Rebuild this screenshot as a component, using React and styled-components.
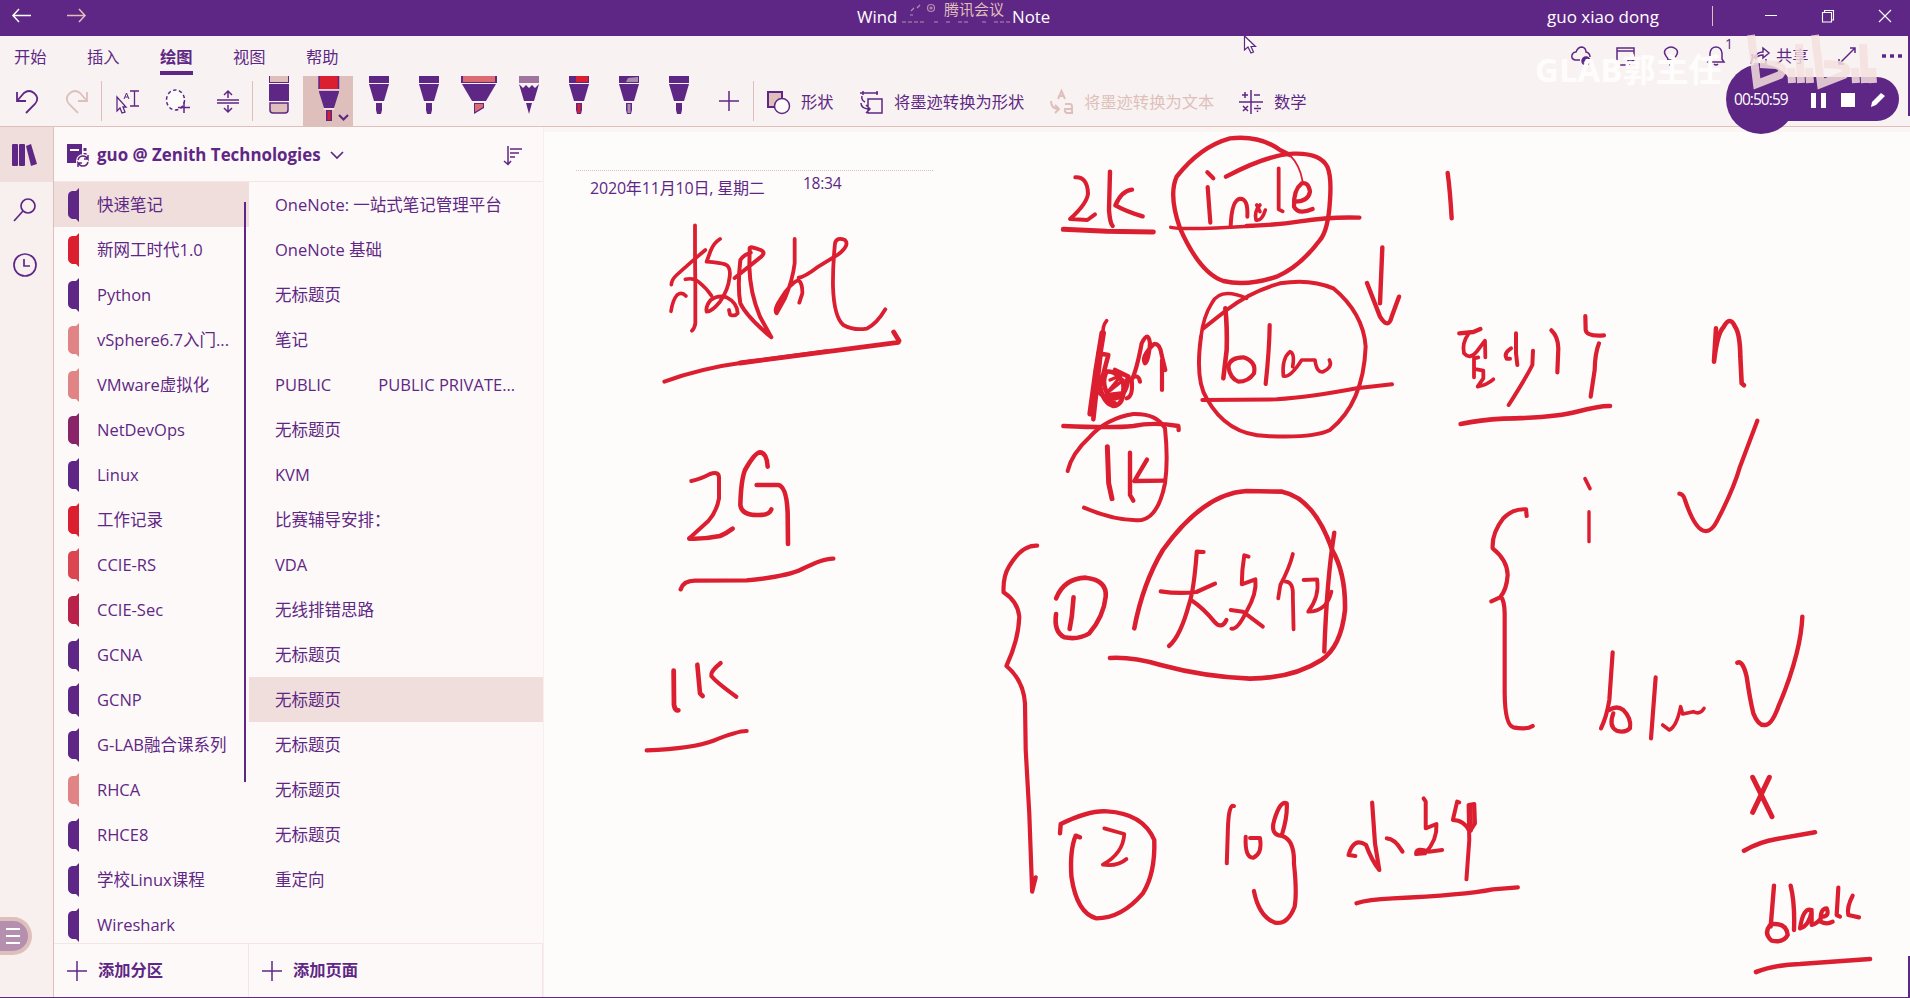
import React from "react";
import styled, { createGlobalStyle, css } from "styled-components";

const c = {
  purple: "#5f2785",
  red: "#db1f30",
  pink: "#dfbfbb",
  paper: "#fefcfb",
  ribbon: "#f8f3f2",
  rail: "#f8f0ef",
  pane: "#fdf9f8",
  active: "#efdedc",
};

const Global = createGlobalStyle`
  * { box-sizing: border-box; }
  body { margin: 0; overflow: hidden; background: ${c.paper}; }
`;

const Screen = styled.div`
  position: relative;
  width: 1910px;
  height: 998px;
  display: flex;
  flex-direction: column;
  background: ${c.paper};
  color: ${c.purple};
  border-bottom: 1px solid ${c.purple};
  font-family: "Open Sans", "Noto Sans CJK SC", sans-serif;
  font-size: 16.3px;
  line-height: 1;
  white-space: nowrap;
  overflow: hidden;
`;

const Icon = styled.svg`
  display: block;
  flex: none;
  width: ${(p) => p.$w}px;
  height: ${(p) => p.$h || p.$w}px;
  fill: none;
  stroke: ${(p) => p.$color || c.purple};
  stroke-width: ${(p) => p.$sw || 1.5};
  overflow: visible;
`;

/* title bar */
const TitleBar = styled.header`
  height: 36px;
  flex: none;
  display: grid;
  grid-template-columns: 857px 1fr 363px;
  background: ${c.purple};
  color: #fff;
`;
const NavArrows = styled.div`
  display: flex;
  gap: 36px;
  padding: 9px 0 0 12px;
`;
const Title = styled.div`
  display: flex;
  padding-top: 8px;
  font-size: 16.8px;
  line-height: 18px;
`;
const TitlePart = styled.span`
  width: ${(p) => p.$w}px;
`;
const Meeting = styled.span`
  display: flex;
  align-items: center;
  gap: 8px;
  width: 114px;
  padding-left: 10px;
  margin-top: -9px;
  height: 20px;
  font-size: 15px;
  color: ${c.pink};
`;
const WindowArea = styled.div`
  display: flex;
  font-size: 17px;
`;
const Account = styled.span`
  width: 165px;
  padding-top: 8px;
  line-height: 18px;
`;
const WindowButtons = styled.div`
  display: flex;
  gap: 45px;
  height: 20px;
  margin-top: 6px;
  padding: 4px 0 0 52px;
  border-left: 1px solid ${c.pink};
`;

/* ribbon */
const Ribbon = styled.div`
  height: 91px;
  flex: none;
  background: ${c.ribbon};
  border-bottom: 1px solid ${c.pink};
`;
const TabsRow = styled.div`
  display: flex;
  height: 40px;
  padding-left: 14px;
`;
const Tab = styled.div`
  width: 33px;
  height: 39px;
  margin-right: 40px;
  padding-top: 13px;
  ${(p) =>
    p.$on &&
    css`
      font-weight: 700;
      border-bottom: 4px solid ${c.purple};
    `}
`;
const Actions = styled.div`
  display: flex;
  align-items: center;
  margin-left: 1192px;
  height: 40px;
`;
const Action = styled.div`
  width: ${(p) => p.$w}px;
  position: relative;
  display: flex;
  align-items: center;
  gap: 6px;
`;
const Count = styled.span`
  position: absolute;
  left: 18px;
  top: -9px;
  font-size: 14px;
`;
const ToolsRow = styled.div`
  display: flex;
  height: 50px;
  padding-left: 1px;
`;
const Tool = styled.div`
  width: 50px;
  height: 50px;
  display: flex;
  justify-content: center;
  align-items: ${(p) => (p.$pen ? "flex-start" : "center")};
  padding-left: 1px;
  background: ${(p) => (p.$on ? c.pink : "transparent")};
`;
const Divider = styled.div`
  width: 1px;
  height: 40px;
  margin-top: 5px;
  background: ${c.pink};
`;
const LabelTool = styled.div`
  display: flex;
  align-items: center;
  gap: 11px;
  width: ${(p) => p.$w}px;
  padding-top: 2px;
  color: ${(p) => (p.$off ? c.pink : c.purple)};
`;

/* body */
const Body = styled.div`
  flex: 1;
  min-height: 0;
  display: flex;
`;
const Rail = styled.nav`
  width: 54px;
  background: ${c.rail};
  border-right: 1px solid ${c.pink};
`;
const RailItem = styled.div`
  height: 55px;
  display: flex;
  align-items: center;
  justify-content: center;
  padding-right: 4px;
  background: ${(p) => (p.$on ? c.active : "transparent")};
`;
const Nav = styled.aside`
  width: 490px;
  display: flex;
  flex-direction: column;
  background: ${c.pane};
  border-right: 1px solid #f8eeec;
`;
const Notebook = styled.div`
  height: 55px;
  flex: none;
  display: flex;
  align-items: center;
  padding: 2px 21px 0 13px;
  border-bottom: 1px solid #f3e6e4;
`;
const NotebookName = styled.span`
  width: 225px;
  margin: 0 9px 0 8px;
  font-size: 16.9px;
  font-weight: 700;
`;
const Spacer = styled.div`
  flex: 1;
`;
const Columns = styled.div`
  flex: 1;
  min-height: 0;
  display: flex;
`;
const Column = styled.div`
  position: relative;
  width: ${(p) => p.$w}px;
  display: flex;
  flex-direction: column;
`;
const Rows = styled.div`
  flex: 1;
  min-height: 0;
  overflow: hidden;
`;
const Row = styled.div`
  height: 45px;
  display: flex;
  align-items: center;
  padding-left: ${(p) => p.$pad}px;
  gap: 18px;
  white-space: pre;
  font-size: 16.5px;
  background: ${(p) => (p.$on ? c.active : "transparent")};
`;
const Bookmark = styled.svg`
  width: 11px;
  height: 34px;
  flex: none;
  fill: ${(p) => p.$c};
`;
const RowText = styled.span`
  padding-top: 1px;
`;
const AddRow = styled.div`
  height: 54px;
  flex: none;
  display: flex;
  align-items: center;
  gap: 11px;
  padding-left: 13px;
  font-weight: 700;
  border-top: 1px solid #f3e6e4;
  border-right: 1px solid #f3e6e4;
`;
const Scrollbar = styled.div`
  position: absolute;
  right: 3px;
  top: 20px;
  width: 2px;
  height: 580px;
  background: ${c.purple};
`;
const Page = styled.main`
  flex: 1;
  padding: 43px 0 0 32px;
  box-shadow: inset 0 5px 0 #fbf5f4;
`;
const PageMeta = styled.div`
  width: 357px;
  display: flex;
  padding-left: 14px;
  border-top: 1px dotted ${c.pink};
`;
const DateText = styled.span`
  width: 213px;
  padding-top: 9px;
  font-size: 16px;
  letter-spacing: -0.18px;
`;
const TimeText = styled.span`
  padding-top: 5px;
  font-size: 15.6px;
  letter-spacing: -0.3px;
`;

/* overlays */
const Ink = styled.svg`
  position: absolute;
  left: 0;
  top: 0;
  width: 1910px;
  height: 998px;
  fill: none;
  stroke: ${c.red};
  stroke-linecap: round;
  stroke-linejoin: round;
  pointer-events: none;
  path {
    vector-effect: non-scaling-stroke;
  }
`;
const Recorder = styled.div`
  position: absolute;
  left: 1726px;
  top: 64px;
  width: 173px;
  height: 70px;
`;
const Dial = styled.div`
  position: absolute;
  left: 0;
  top: 0;
  width: 70px;
  height: 70px;
  border-radius: 50%;
  background: ${c.purple};
`;
const Pill = styled.div`
  position: absolute;
  left: 30px;
  top: 13px;
  width: 143px;
  height: 44px;
  border-radius: 0 22px 22px 0;
  background: ${c.purple};
`;
const Controls = styled.div`
  position: absolute;
  left: 8px;
  top: 28px;
  display: flex;
  align-items: center;
  height: 16px;
  color: #fff;
  font-size: 15.4px;
  letter-spacing: -0.9px;
`;
const Elapsed = styled.span`
  width: 77px;
`;
const Watermark = styled.div`
  position: absolute;
  left: 1535px;
  top: 51px;
  font-size: 33px;
  line-height: 38px;
  font-weight: 700;
  color: #fffdfc;
`;
const Floating = styled.svg`
  position: absolute;
  left: ${(p) => p.$x}px;
  top: ${(p) => p.$y}px;
  width: ${(p) => p.$w}px;
  height: ${(p) => p.$h}px;
  overflow: visible;
`;
const EdgeMark = styled.div`
  position: absolute;
  right: 0;
  top: ${(p) => p.$y}px;
  width: 2px;
  height: ${(p) => p.$h}px;
  background: ${c.purple};
`;
const SideBadge = styled.div`
  position: absolute;
  left: 0;
  top: 917px;
  width: 32px;
  height: 38px;
  border-radius: 0 19px 19px 0;
  border: 4px solid ${c.pink};
  border-left: 0;
  background: #b58fae;
  display: flex;
  flex-direction: column;
  justify-content: center;
  gap: 5px;
  padding-left: 6px;
`;
const BadgeLine = styled.div`
  width: 14px;
  height: 2px;
  background: #fff;
`;

const pens = [
  { cap: c.purple, nib: c.purple },
  { cap: c.purple, nib: c.purple },
  { kind: "marker", cap: "#dd6a70", nib: "#dd6a70" },
  { kind: "pencil", cap: "#9f75a0", nib: c.purple },
  { cap: c.purple, cap2: c.red, nib: c.red },
  { cap: c.purple, cap2: "#a98fae", nib: "#a98fae", half: true },
  { cap: c.purple, nib: c.purple },
];

function Pen({ kind, cap, cap2, nib, half }) {
  if (kind === "marker")
    return (
      <Icon $w={36} $h={38} viewBox="0 0 36 38">
        <g stroke="none">
          <path d="M0 0H36V7H0Z" fill={c.purple} />
          <path d="M2 0H34V6H2Z" fill={cap} />
          <path d="M1 8H35L25 25H11Z" fill={c.purple} />
          <path d="M13 27H23V32L13 38Z" fill={c.purple} />
          <path d="M14 28H22V31L14 36Z" fill={nib} />
        </g>
      </Icon>
    );
  return (
    <Icon $w={20} $h={38} viewBox="0 0 20 38">
      <g stroke="none" fill={c.purple}>
        <path d="M0 0H20V7H0Z" fill={cap} />
        {cap2 && <path d={half ? "M9 2L19 1V6H7Z" : "M7 0H19V6H7Z"} fill={cap2} />}
        {kind === "pencil" ? (
          <>
            <path d="M0 8L4 12L7 9L10 12L13 9L16 12L20 8L15 25H5Z" />
            <path d="M7 27H13L10 38Z" />
          </>
        ) : (
          <>
            <path d="M0 8H20L15 25H5Z" />
            <path d="M7 27H13V34L12 38H8L7 34Z" />
            {nib !== c.purple && <path d="M8.5 28H11.5V37H8.5Z" fill={nib} />}
          </>
        )}
      </g>
    </Icon>
  );
}

const sections = [
  ["快速笔记", c.purple],
  ["新网工时代1.0", c.red],
  ["Python", c.purple],
  ["vSphere6.7入门...", "#e08486"],
  ["VMware虚拟化", "#e08486"],
  ["NetDevOps", "#8a2468"],
  ["Linux", c.purple],
  ["工作记录", c.red],
  ["CCIE-RS", "#dc4650"],
  ["CCIE-Sec", "#b8214a"],
  ["GCNA", c.purple],
  ["GCNP", c.purple],
  ["G-LAB融合课系列", c.purple],
  ["RHCA", "#e08486"],
  ["RHCE8", c.purple],
  ["学校Linux课程", c.purple],
  ["Wireshark", c.purple],
];

const pages = [
  "OneNote: 一站式笔记管理平台",
  "OneNote 基础",
  "无标题页",
  "笔记",
  "PUBLIC           PUBLIC PRIVATE...",
  "无标题页",
  "KVM",
  "比赛辅导安排：",
  "VDA",
  "无线排错思路",
  "无标题页",
  "无标题页",
  "无标题页",
  "无标题页",
  "无标题页",
  "重定向",
];

/* handwriting: [transform, [[pen width, stroke], ...]] */
const T = (x, y, sx = 3) => `translate(${x} ${y}) scale(${1 / sx} ${1 / 3})`;
const ink = [
  [T(560, 120), [
    [3.2, "M405 316V400L406 500V610Q404 625 396 632"],
    [3, "M436 390Q400 420 350 465Q335 478 334 494"],
    [3, "M376 478Q400 472 415 485Q440 505 455 528"],
    [3, "M333 574Q338 540 352 524Q366 515 378 528"],
    [3.2, "M480 357Q462 368 452 392L440 425Q480 428 495 433Q513 440 509 470Q505 510 480 545Q455 575 440 575Q436 560 452 540Q475 524 500 532Q532 548 533 580Q525 590 510 584L507 570"],
    [3.4, "M524 474L600 413Q620 398 602 390Q570 378 569 384L568 440Q570 520 600 590L634 652Q560 590 541 550Q532 500 541 420Q550 405 572 398"],
    [3.2, "M704 357V430Q698 480 675 535L650 580Q640 570 660 540Q690 490 715 480Q728 490 727 520L718 548"],
    [3.2, "M716 473Q735 470 770 443L835 403Q870 375 855 360Q830 350 825 370Q818 440 819 500Q822 590 850 615Q880 632 920 626Q950 612 976 568"],
    [3.4, "M313 785Q420 745 560 726L800 694"],
    [4.2, "M540 729L1015 667M1001 636L1017 662"],
  ]],
  [T(560, 420), [
    [3.4, "M394 183Q420 178 450 162Q478 152 477 175V235Q470 275 445 303L388 355"],
    [4, "M388 356Q430 358 480 348Q500 340 518 326"],
    [4, "M623 140Q620 98 600 97Q585 97 555 150Q543 180 541 255Q545 285 590 285Q628 287 634 268"],
    [4, "M590 195H655Q680 200 683 280L684 372"],
    [3.8, "M362 508Q370 482 405 482L560 481Q680 470 725 448Q790 415 820 416"],
    [4.2, "M341 752L342 855Q345 872 355 871"],
    [4, "M412 734L420 820L428 828"],
    [3.6, "M482 729Q450 755 454 768Q470 788 529 830"],
    [3.6, "M260 991Q400 985 460 962Q535 932 560 933"],
  ]],
  [T(1000, 120), [
    [3.4, "M226 172Q262 170 264 220Q262 250 210 297L262 300L285 283"],
    [3.8, "M330 155L327 270Q330 310 338 318M396 209Q365 212 346 256Q380 275 428 289"],
    [4.4, "M190 328L320 334L460 336"],
    [3.8, "M678 170Q800 105 880 101Q960 98 982 140Q995 170 990 240Q985 330 960 360Q900 440 830 470Q740 500 670 483Q600 460 540 325Q505 225 530 170Q600 80 690 55Q780 45 840 90L870 105"],
    [1.2, "M868 104Q900 135 908 185"],
    [3.6, "M622 157L640 175M623 201L631 308"],
    [3.4, "M692 318Q695 240 720 236Q745 235 742 290"],
    [3, "M780 255Q762 275 768 300Q785 305 796 270M770 255L780 275"],
    [3.2, "M836 145V268L848 274"],
    [3.6, "M885 245Q925 245 930 215Q925 185 905 190Q880 210 882 260Q895 285 938 267"],
    [2.8, "M512 322Q540 328 650 324L760 318"],
    [3.8, "M740 318Q830 315 900 304Q990 290 1078 293"],
    [3.8, "M1147 382L1140 550M1101 489L1140 590Q1165 630 1175 590L1197 530"],
    [3, "M740 535Q660 500 635 550Q610 590 603 650"],
    [3.4, "M603 650Q585 780 620 835Q680 945 800 948Q940 955 990 930Q1090 850 1097 680Q1090 580 1000 505Q930 475 840 490Q750 515 680 570L610 625"],
    [4, "M676 565Q682 620 680 690L670 775"],
    [3.6, "M685 740Q690 712 730 712Q770 725 762 760Q745 785 715 785Q690 775 685 740M809 615Q808 690 797 792"],
    [3, "M878 740Q885 700 870 695Q845 715 850 768Q870 775 905 720L945 720Q950 760 970 755Q1000 740 988 720"],
    [3.4, "M607 840L830 838Q930 832 1070 805L1176 793"],
    [3, "M320 602Q305 620 310 650"],
    [6, "M308 640L290 750L272 880"],
    [4, "M302 700L280 898M295 700L325 705L300 800Q310 850 340 858Q375 855 370 790Q350 750 320 755"],
    [4, "M320 755Q300 790 330 835Q380 840 385 770L345 750M325 825L370 820M300 820L345 850M385 770L365 830"],
    [2.6, "M330 780L365 765L320 820L370 780"],
    [3.6, "M380 835Q400 830 395 780Q410 750 425 670Q445 630 450 670Q445 730 435 730Q422 710 462 672Q480 670 485 705L496 750M420 785Q415 760 395 775M486 720V810"],
    [3.8, "M190 918Q340 925 400 918Q460 905 535 918L536 930"],
    [3.4, "M203 1053Q215 1000 270 950Q320 895 400 882Q470 880 495 925Q505 1020 495 1090Q475 1190 425 1200Q350 1205 252 1163"],
    [4.4, "M322 980L326 1090L336 1136"],
    [3.8, "M390 998V1125L400 1142M441 1019L403 1083L495 1082"],
  ]],
  [T(1000, 530, 2.8), [
    [4, "M376 295Q400 160 456 60Q570 -110 690 -117L790 -115Q880 -95 930 60Q968 130 966 240Q955 350 900 390Q820 445 700 446Q570 440 450 405Q370 380 308 384"],
    [3.8, "M936 8Q915 150 908 365"],
    [3.6, "M104 47Q60 45 25 110Q8 140 10 187Q50 215 54 260Q52 330 18 408Q65 450 70 520L72 660L82 850L90 1085L100 1042"],
    [4, "M157 205Q180 145 240 143Q300 150 296 200Q290 260 250 310Q220 330 180 322Q150 305 157 252M206 202L201 260L195 297"],
    [3.6, "M570 66L551 65Q543 180 530 220Q505 320 473 348M450 184Q500 192 550 186L602 161M535 210Q570 235 600 275Q620 300 634 270"],
    [3.4, "M696 80L684 76Q677 120 677 163L715 148Q720 190 690 245Q665 300 648 296M646 240L680 245L736 290"],
    [3.2, "M820 72Q810 115 785 165L779 205M800 155Q822 155 820 200L822 298M850 150L888 148Q895 200 863 245Q915 245 928 185"],
    [3.8, "M168 910L170 882Q250 840 300 844Q400 850 432 930Q435 1030 400 1090Q340 1165 270 1165Q215 1150 200 1040Q195 960 212 917L224 922"],
    [3.2, "M292 895L348 912Q345 970 288 1004Q330 1010 354 987"],
    [3.4, "M655 828Q640 820 638 900L635 1000M688 920Q685 985 710 983Q735 970 728 924H700"],
    [3.6, "M790 912Q805 860 803 820Q785 810 768 870Q755 915 790 918Q825 930 823 1000Q832 1090 825 1130Q805 1185 770 1178Q725 1160 711 1083"],
    [3.6, "M1042 818L1050 940L1062 1020Q1040 990 1025 945Q990 920 976 975L995 978M1083 925Q1105 925 1127 965"],
    [3.4, "M1186 805L1192 815V895L1222 882Q1225 930 1190 970L1165 972Q1165 950 1200 965L1238 960"],
    [3.4, "M1286 817L1280 815L1268 870Q1300 870 1315 905L1330 880L1328 822L1312 825L1314 930L1306 1048"],
    [4.4, "M1317 830V900"],
    [3.6, "M998 1120Q1030 1108 1100 1105Q1300 1095 1380 1078L1450 1072"],
  ]],
  [T(1430, 140), [
    [3.8, "M53 99Q60 150 65 235M88 580L130 576L151 567"],
    [3.2, "M115 582Q95 610 102 640Q120 660 140 635L165 602L166 652M145 652L132 655V712M140 688L160 692V715L143 740Q170 735 190 718"],
    [3.4, "M243 625Q220 640 230 656H240M258 580V640L262 675M309 632L307 675Q290 710 236 795"],
    [3.6, "M364 571Q384 590 385 625L382 697M466 528L467 570Q470 590 522 586M507 610Q495 640 494 690L482 770"],
    [4, "M92 852Q150 840 220 836Q380 832 440 815Q510 797 540 798"],
    [4, "M858 565L852 665Q862 580 880 562Q900 525 915 560Q930 580 931 650L935 730L942 736"],
    [3, "M465 1016L480 1046"],
  ]],
  [T(1450, 480), [
    [3.6, "M688 41Q700 42 705 60Q735 150 765 153Q785 155 800 125Q850 30 870 -40L922 -178"],
    [2.8, "M417 95V185"],
    [3.6, "M230 108L228 88Q190 85 160 115Q125 160 128 205Q172 240 173 285Q170 330 150 352L124 364M152 350Q163 360 164 400V640Q165 735 190 742Q230 750 248 738"],
    [3.6, "M488 517L478 660Q470 710 453 745M478 690Q500 675 520 690Q545 715 540 745Q525 760 500 752Q475 740 490 700M617 592L603 775"],
    [3, "M638 735L658 750Q680 740 692 680L698 702L730 695Q750 705 762 685"],
    [3.8, "M862 548Q878 540 890 590Q900 660 910 700Q925 738 945 735Q965 735 985 680Q1020 600 1040 520Q1055 460 1057 410"],
    [4.4, "M908 892L966 1010M958 892L908 997"],
    [4, "M882 1112Q930 1085 980 1077L1095 1057"],
    [3.8, "M972 1217L962 1340M960 1335Q940 1360 965 1382Q1000 1390 1013 1365Q1010 1330 970 1332M1022 1217Q1035 1270 1032 1350"],
    [3.6, "M1085 1290Q1060 1280 1050 1345Q1075 1340 1085 1295V1335Q1105 1330 1115 1310Q1140 1310 1130 1285Q1110 1285 1112 1325Q1130 1335 1148 1325M1165 1223L1160 1305L1170 1310M1208 1247Q1190 1280 1195 1305L1227 1312"],
    [4, "M918 1476Q970 1455 1050 1452L1260 1437"],
  ]],
];

const Plus = () => (
  <Icon $w={20} viewBox="0 0 20 20">
    <path d="M10 0V20M0 10H20" />
  </Icon>
);

export default function App() {
  return (
    <Screen>
      <Global />
      <TitleBar>
        <NavArrows>
          <Icon $w={19} $h={13} viewBox="0 0 19 13" $color="#fff">
            <path d="M7 0L1 6.5L7 13M1 6.5H19" />
          </Icon>
          <Icon $w={19} $h={13} viewBox="0 0 19 13" $color={c.pink}>
            <path d="M12 0L18 6.5L12 13M18 6.5H0" />
          </Icon>
        </NavArrows>
        <Title>
          <TitlePart $w={41}>Wind</TitlePart>
          <Meeting>
            <Icon $w={28} $h={12} viewBox="0 0 28 12" $color="#b58fae" $sw={1.2}>
              <path d="M3 8L6 5M9 5L12 2M2 12H5" />
              <circle cx="23" cy="5" r="3.5" />
              <circle cx="23" cy="5" r="1" />
              <path d="M-6 19H18M26 19H30M38 19H42M50 19H62M74 19H80M86 19H102" strokeDasharray="4 2" />
            </Icon>
            腾讯会议
          </Meeting>
          <TitlePart>Note</TitlePart>
        </Title>
        <WindowArea>
          <Account>guo xiao dong</Account>
          <WindowButtons>
            <Icon $w={12} viewBox="0 0 12 12" $color="#fff" $sw={1}>
              <path d="M0 5.5H12" />
            </Icon>
            <Icon $w={12} viewBox="0 0 12 12" $color="#fff" $sw={1.1}>
              <path d="M.5 2.5H9.5V12H.5ZM2.5 2.5V.5H11.5V10H9.5" />
            </Icon>
            <Icon $w={12} viewBox="0 0 12 12" $color="#fff" $sw={1.1}>
              <path d="M0 0L12 12M12 0L0 12" />
            </Icon>
          </WindowButtons>
        </WindowArea>
      </TitleBar>

      <Ribbon>
        <TabsRow>
          <Tab>开始</Tab>
          <Tab>插入</Tab>
          <Tab $on>绘图</Tab>
          <Tab>视图</Tab>
          <Tab>帮助</Tab>
          <Actions>
            <Action $w={45}>
              <Icon $w={20} viewBox="0 0 20 20">
                <path d="M9 14H4Q0 13 1 9Q2 6 5 6Q7 1 11 1Q15 2 15 6Q19 7 19 11" />
                <circle cx="15" cy="15" r="4" fill={c.purple} />
                <path d="M13 17L17 13" stroke={c.pink} />
              </Icon>
            </Action>
            <Action $w={48}>
              <Icon $w={19} viewBox="0 0 19 19">
                <path d="M1 1H18V13L12 18H1ZM1 4H18M12 18V13H18" />
              </Icon>
            </Action>
            <Action $w={43}>
              <Icon $w={14} $h={20} viewBox="0 0 14 20">
                <path d="M4 14Q4 12 2 10Q-1 6 2 3Q7 -1 12 3Q15 6 12 10Q10 12 10 14ZM4 17H10M5 19H9" />
              </Icon>
            </Action>
            <Action $w={43}>
              <Icon $w={18} $h={20} viewBox="0 0 18 20">
                <path d="M1 16H17L15 13V7Q14 1 9 1Q4 1 3 7V13ZM7 18Q9 20 11 18" />
              </Icon>
              <Count>1</Count>
            </Action>
            <Action $w={88}>
              <Icon $w={20} $h={18} viewBox="0 0 20 18">
                <path d="M1 17L3 8H1M4 11Q7 5 13 5V1L19 6L13 11V8Q8 8 5 12M16 12V17H4" />
              </Icon>
              共享
            </Action>
            <Action $w={44}>
              <Icon $w={18} viewBox="0 0 18 18">
                <path d="M1 17L17 1M12 1H17V6M1 12V17H6" />
              </Icon>
            </Action>
            <Action $w={20}>
              <Icon $w={20} $h={4} viewBox="0 0 20 4">
                <path d="M0 2H4M8 2H12M16 2H20" strokeWidth="3.4" />
              </Icon>
            </Action>
          </Actions>
        </TabsRow>
        <ToolsRow>
          <Tool>
            <Icon $w={22} $h={23} viewBox="0 0 22 23" $sw={1.8}>
              <path d="M1 2V11H10M1 11L8 3Q13 -1 18 3Q24 8 19 14L10 23" />
            </Icon>
          </Tool>
          <Tool>
            <Icon $w={22} $h={23} viewBox="0 0 22 23" $color={c.pink} $sw={1.8}>
              <path d="M21 2V11H12M21 11L14 3Q9 -1 4 3Q-2 8 3 14L12 23" />
            </Icon>
          </Tool>
          <Divider />
          <Tool>
            <Icon $w={23} viewBox="0 0 23 23" $sw={1.3}>
              <path d="M1 7V21L4 18L6 23L9 22L7 17H10ZM14 1H23M14 16H23M18.5 1V16" />
              <path d="M8 9L10.5 3L13 9M9 7H12" strokeWidth="1" />
            </Icon>
          </Tool>
          <Tool>
            <Icon $w={24} viewBox="0 0 24 24">
              <ellipse cx="9.5" cy="11" rx="9" ry="10" fill={c.paper} strokeDasharray="3.5 2.5" />
              <path d="M18 13V24M12 18.5H24" />
            </Icon>
          </Tool>
          <Tool>
            <Icon $w={22} $h={23} viewBox="0 0 22 23">
              <path d="M11 1V8M7 5L11 1L15 5M11 15V22M7 18L11 22L15 18M0 10H22M0 13H22" />
            </Icon>
          </Tool>
          <Divider />
          <Tool $pen>
            <Icon $w={20} $h={38} viewBox="0 0 20 38">
              <g stroke="none">
                <path d="M0 0H20V7H0Z" fill={c.purple} />
                <path d="M1 0H19V6H1Z" fill={c.pink} />
                <path d="M0 8H20V25H0Z" fill={c.purple} />
              </g>
              <path d="M1 27H19V34Q19 37 16 37H4Q1 37 1 34Z" fill={c.pink} />
            </Icon>
          </Tool>
          <Tool $pen $on>
            <Icon $w={20} $h={45} viewBox="0 0 20 45">
              <path d="M0 0H20V13H0Z" fill={c.red} stroke="none" />
              <path d="M0 0V13M19.5 0V13" />
              <path d="M0 14H20V16L15 32H5L0 16Z" fill={c.purple} stroke="none" />
              <path d="M0 14.2H20M4.500 33H15.5" stroke={c.paper} strokeWidth="1" />
              <path d="M7 34H13V45H7Z" fill={c.purple} stroke="none" />
              <path d="M8.5 35H11.5V44H8.5Z" fill={c.red} stroke="none" />
              <path d="M20 39L24.5 43.5L29 39" strokeWidth="2.2" />
            </Icon>
          </Tool>
          {pens.map((p, i) => (
            <Tool $pen key={i}>
              <Pen {...p} />
            </Tool>
          ))}
          <Tool>
            <Plus />
          </Tool>
          <Divider />
          <LabelTool $w={106}>
            <Icon $w={36} $h={23} viewBox="-13 0 36 23">
              <path d="M9 16H1V1H15V7" strokeWidth="2" fill={c.pink} />
              <ellipse cx="15" cy="15" rx="7.5" ry="7.5" fill={c.paper} />
            </Icon>
            形状
          </LabelTool>
          <LabelTool $w={190}>
            <Icon $w={23} viewBox="0 0 23 23">
              <path d="M3 0V4M0 2H18M17 0V4M8 8H22V22H8ZM2 5Q1 9 5 11M1 12Q1 18 10 18M6 14L10 18L6 22" />
            </Icon>
            将墨迹转换为形状
          </LabelTool>
          <LabelTool $w={189} $off>
            <Icon $w={23} viewBox="0 0 23 23" $color={c.pink} $sw={2}>
              <path d="M8 8L11.5 0L15 8M9 5H14M1 10Q1 18 9 18M5 14L9 18L5 22" />
              <path d="M15 13H20Q22 13 22 16V22H17Q14 21 15 18H22" />
            </Icon>
            将墨迹转换为文本
          </LabelTool>
          <LabelTool $w={80}>
            <Icon $w={24} viewBox="0 0 24 24">
              <path d="M12 0V24M0 12H24M3 5H9M6 2V8M15 5H21M4 16L9 21M9 16L4 21M15 18.5H22M18.5 15V16.5M18.5 20.5V22" />
            </Icon>
            数学
          </LabelTool>
        </ToolsRow>
      </Ribbon>

      <Body>
        <Rail>
          <RailItem $on>
            <Icon $w={25} $h={22} viewBox="0 0 25 22">
              <g fill={c.purple} stroke="none">
                <rect x="0" y="0" width="6" height="22" rx="1" />
                <rect x="7" y="0" width="6" height="22" rx="1" />
                <path d="M14 2L19 0L25 20L19 22Z" />
              </g>
            </Icon>
          </RailItem>
          <RailItem>
            <Icon $w={22} $h={23} viewBox="0 0 22 23" $sw={1.7}>
              <circle cx="14" cy="8" r="7" />
              <path d="M9 13L0 23" />
            </Icon>
          </RailItem>
          <RailItem>
            <Icon $w={24} viewBox="0 0 24 24" $sw={1.7}>
              <circle cx="12" cy="12" r="11" />
              <path d="M11 6V13H17" />
            </Icon>
          </RailItem>
        </Rail>

        <Nav>
          <Notebook>
            <Icon $w={22} $h={23} viewBox="0 0 22 23">
              <path d="M0 0H15V11L9 19H0Z" fill={c.purple} stroke="none" />
              <path d="M3 6H12" stroke="#fff" strokeWidth="2" />
              <path d="M18 4V7M18 9V11" strokeWidth="3" />
              <circle cx="16" cy="17" r="7" fill={c.pane} stroke="none" />
              <path d="M11 16Q12 12 16 12Q19 12 21 15V11M21 15H17M21 18Q20 22 16 22Q13 22 11 19V23M11 19H15" />
            </Icon>
            <NotebookName>guo @ Zenith Technologies</NotebookName>
            <Icon $w={12} $h={7} viewBox="0 0 12 7" $sw={1.7}>
              <path d="M0 0L6 6L12 0" />
            </Icon>
            <Spacer />
            <Icon $w={18} $h={19} viewBox="0 0 18 19">
              <path d="M4 0V18M0 15L4 18.5L7 15M6 3H18M6 7H15M6 11H11" />
            </Icon>
          </Notebook>
          <Columns>
            <Column $w={195}>
              <Rows>
                {sections.map(([name, color], i) => (
                  <Row key={name} $pad={14} $on={i === 0}>
                    <Bookmark viewBox="0 0 11 34" $c={color}>
                      <path d="M11 0V34L8 31H4Q0 29 0 26V8Q0 4 4 3H8Z" />
                    </Bookmark>
                    <RowText>{name}</RowText>
                  </Row>
                ))}
              </Rows>
              <Scrollbar />
              <AddRow>
                <Plus />
                添加分区
              </AddRow>
            </Column>
            <Column $w={294}>
              <Rows>
                {pages.map((name, i) => (
                  <Row key={i} $pad={26} $on={i === 11}>
                    <RowText>{name}</RowText>
                  </Row>
                ))}
              </Rows>
              <AddRow>
                <Plus />
                添加页面
              </AddRow>
            </Column>
          </Columns>
        </Nav>

        <Page>
          <PageMeta>
            <DateText>2020年11月10日, 星期二</DateText>
            <TimeText>18:34</TimeText>
          </PageMeta>
        </Page>
      </Body>

      <Ink viewBox="0 0 1910 998">
        {ink.map(([transform, strokes], i) => (
          <g key={i} transform={transform}>
            {strokes.map(([w, d], j) => (
              <path key={j} d={d} strokeWidth={w + 0.6} />
            ))}
          </g>
        ))}
      </Ink>

      <Recorder>
        <Dial />
        <Pill />
        <Controls>
          <Elapsed>00:50:59</Elapsed>
          <Icon $w={75} $h={15} viewBox="0 0 75 15">
            <g fill="#fff" stroke="none">
              <path d="M0 0H5V15H0ZM10 0H15V15H10ZM30 0H44V14H30Z" />
              <path d="M60 14L61 9L70 0L74 3L65 12Z" />
            </g>
          </Icon>
        </Controls>
      </Recorder>
      <Watermark>GLAB郭主任</Watermark>
      <Floating $x={1748} $y={32} $w={130} $h={56} viewBox="0 0 130 56" fill="none" stroke="#f3dfdd" strokeOpacity="0.85" strokeWidth="8">
        <path d="M3 3L9 52L32 43Q38 36 28 33L12 32M43 36L44 51M51 12L53 51M61 36L62 51" />
        <path d="M67 3L73 52L96 43Q102 36 92 33L76 32M107 36L108 51M115 12L117 51M124 36L125 51" />
      </Floating>
      <Floating $x={1244} $y={36} $w={12} $h={18} viewBox="0 0 12 18" fill="#fff" stroke={c.purple} strokeWidth="1.2">
        <path d="M.5 0V14L4 11L7 17L9.5 16L7 10.5H11.5Z" />
      </Floating>
      <SideBadge>
        <BadgeLine />
        <BadgeLine />
        <BadgeLine />
      </SideBadge>
      <EdgeMark $y={36} $h={80} />
      <EdgeMark $y={956} $h={42} />
    </Screen>
  );
}
